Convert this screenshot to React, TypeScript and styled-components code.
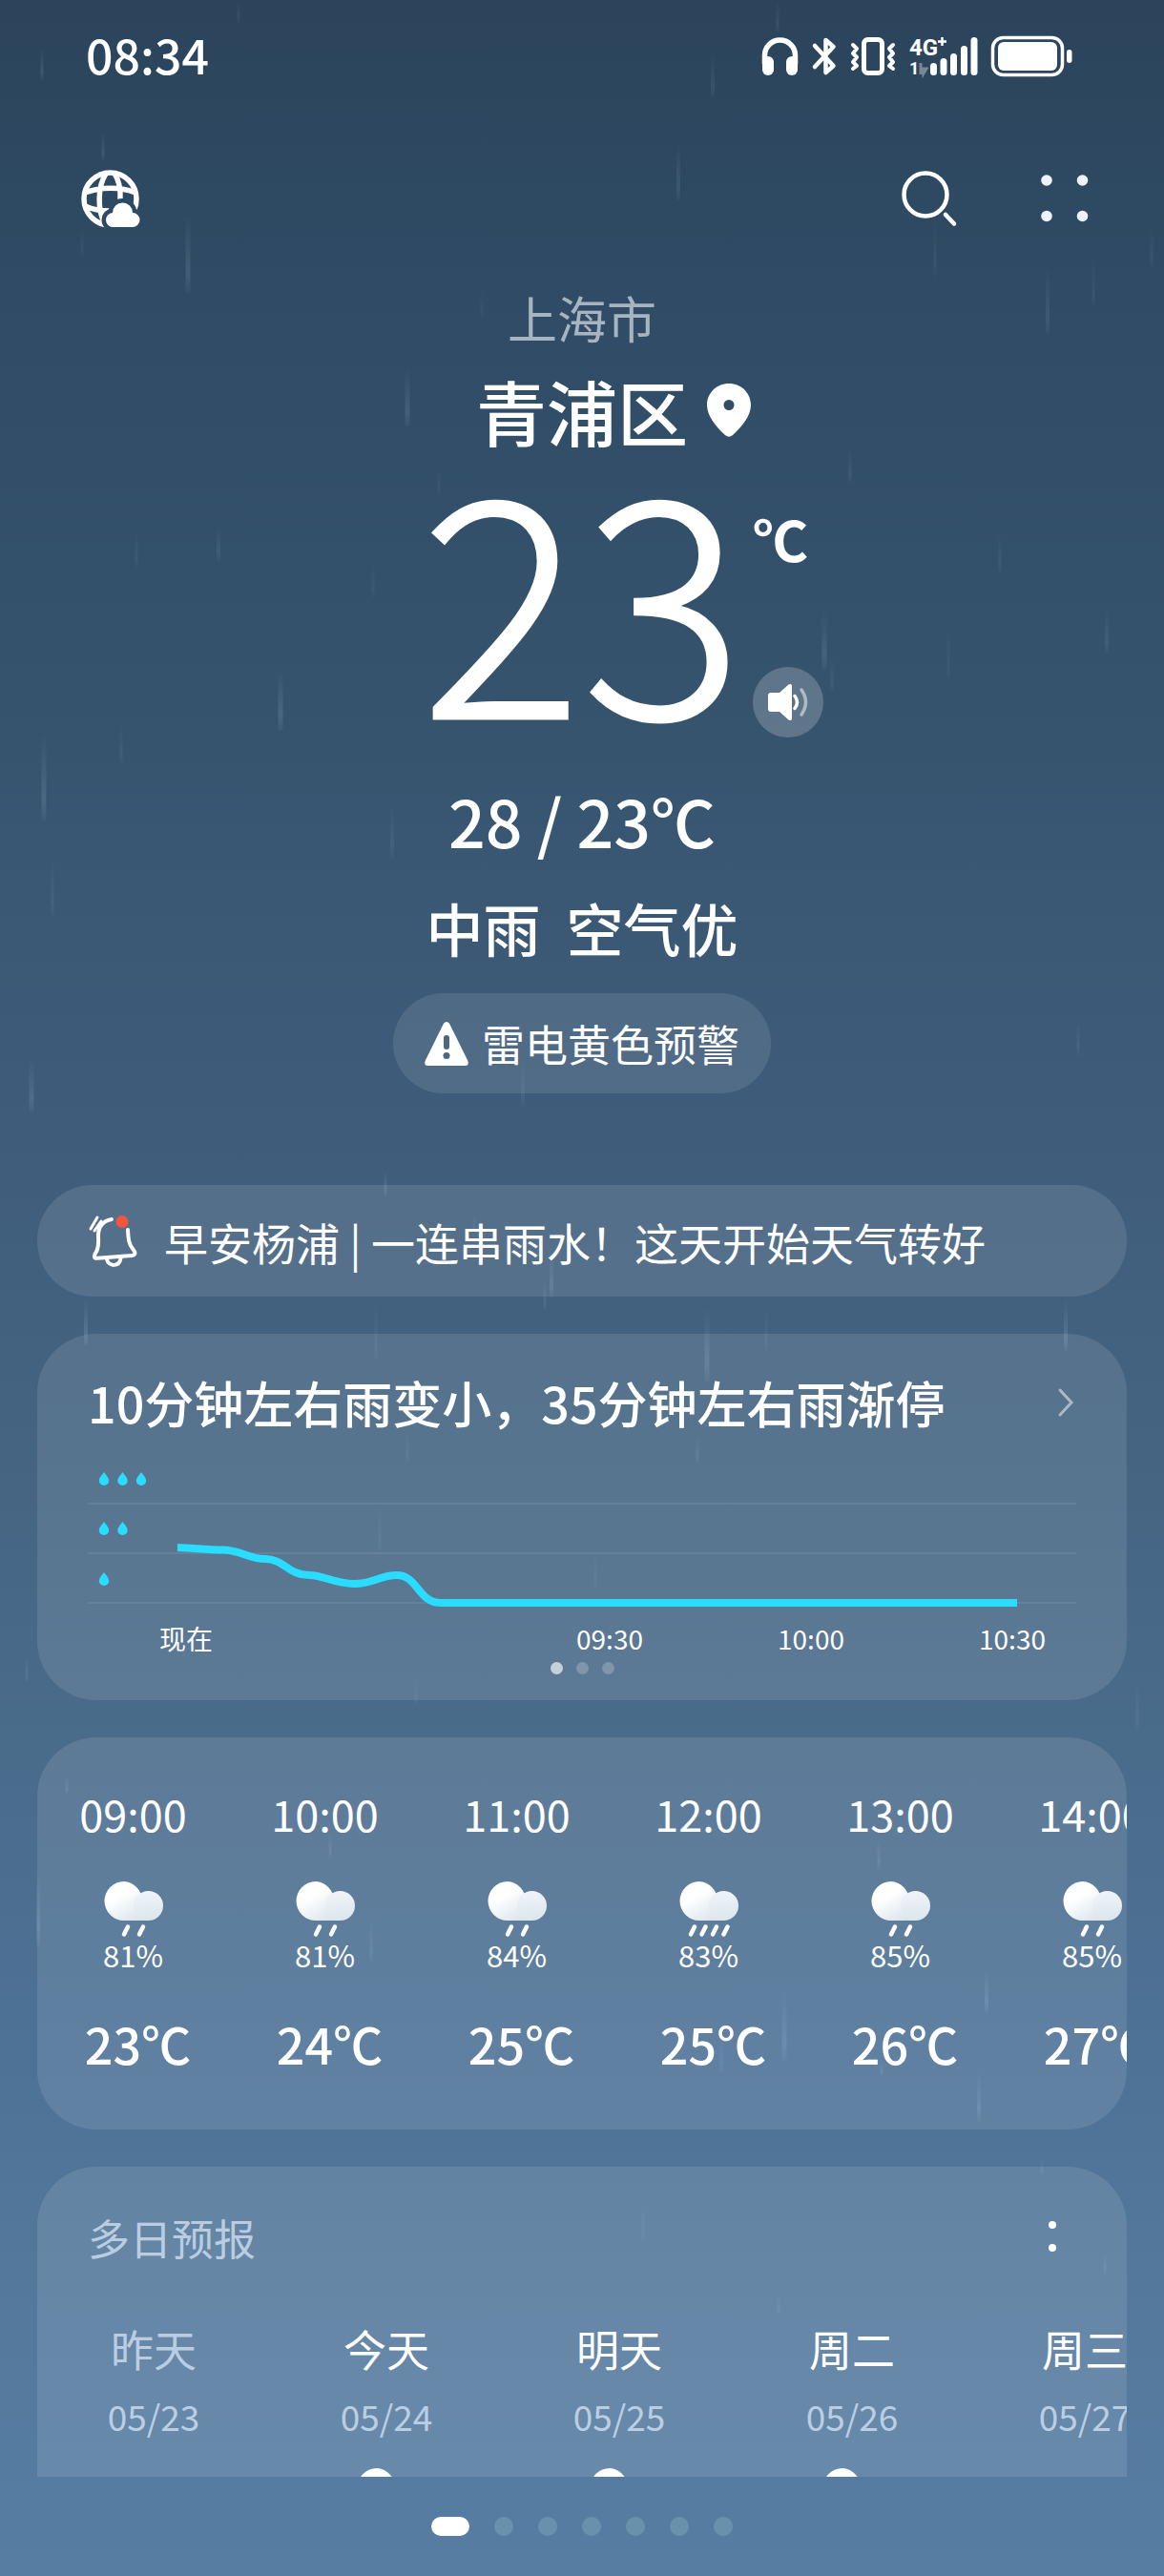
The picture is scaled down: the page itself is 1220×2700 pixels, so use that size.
import React, { useId } from "react";
import styled, { createGlobalStyle } from "styled-components";

const GlobalStyle = createGlobalStyle`
  * { box-sizing: border-box; }
  body {
    margin: 0;
    background: #2c455c;
    color: #fff;
    font-family: "Noto Sans CJK SC", "Noto Sans", sans-serif;
  }
  button { font: inherit; color: inherit; background: none; border: 0; padding: 0; cursor: pointer; }
  svg { display: block; flex: none; overflow: visible; }
  h1, h2, p { margin: 0; font-weight: inherit; }
`;

/* ---------- shell ---------- */

const Shell = styled.div`
  position: relative;
  display: flex;
  flex-direction: column;
  height: 100vh;
  overflow: hidden;
  background: linear-gradient(
    180deg,
    #2b445b 0%,
    #2f4b65 11%,
    #37546f 29%,
    #3f5d7b 44%,
    #456583 58%,
    #4a6c8b 68%,
    #4d7095 78%,
    #53789b 88%,
    #587da3 100%
  );
`;

const RainLayer = styled.svg`
  position: absolute;
  inset: 0;
  width: 100%;
  height: 100%;
  pointer-events: none;
`;

const StatusBar = styled.header`
  position: relative;
  display: flex;
  align-items: center;
  justify-content: space-between;
  height: 118px;
  padding: 0 96px 0 90px;
  flex: none;
`;

const Clock = styled.time`
  padding-bottom: 6px;
  font-size: 50px;
  line-height: 60px;
  font-weight: 500;
`;

const StatusIcons = styled.div`
  display: flex;
  align-items: center;
  gap: 14px;
`;

const Toolbar = styled.nav`
  position: relative;
  display: flex;
  align-items: center;
  height: 180px;
  padding: 0 79px 0 85px;
  gap: 89px;
  flex: none;
`;

const IconButton = styled.button<{ $first?: boolean }>`
  display: flex;
  margin-right: ${(p) => (p.$first ? "auto" : "0")};
`;

const Scroller = styled.main`
  position: relative;
  flex: 1;
  min-height: 0;
  overflow-y: auto;
  scrollbar-width: none;
`;

const PageDots = styled.footer`
  position: relative;
  display: flex;
  align-items: center;
  justify-content: center;
  gap: 26px;
  height: 104px;
  flex: none;
`;

const PageDot = styled.button<{ $active?: boolean }>`
  width: ${(p) => (p.$active ? 40 : 20)}px;
  height: 20px;
  border-radius: 10px;
  background: ${(p) => (p.$active ? "#fff" : "rgba(130, 170, 185, 0.45)")};
`;

/* ---------- hero ---------- */

const Hero = styled.section`
  display: flex;
  flex-direction: column;
  align-items: center;
`;

const City = styled.p`
  font-size: 52px;
  line-height: 70px;
  color: rgba(255, 255, 255, 0.58);
`;

const CenteredRow = styled.div`
  display: grid;
  grid-template-columns: 1fr auto 1fr;
  width: 100%;
`;

const DistrictRow = styled(CenteredRow)`
  align-items: center;
  column-gap: 20px;
  margin-top: 12px;
`;

const District = styled.h1`
  grid-column: 2;
  font-size: 74px;
  line-height: 100px;
  font-weight: 500;
`;

const TempRow = styled(CenteredRow)`
  column-gap: 10px;
  height: 293px;
`;

const BigTemp = styled.p`
  grid-column: 2;
  font-size: 316px;
  line-height: 270px;
  font-weight: 300;
  -webkit-text-stroke: 3px #fff;
`;

const TempSide = styled.div`
  display: flex;
  flex-direction: column;
  align-items: flex-start;
  justify-content: space-between;
  padding-top: 48px;
`;

const Unit = styled.span`
  font-size: 58px;
  line-height: 72px;
  font-weight: 700;
`;

const SpeakButton = styled.button`
  display: flex;
  align-items: center;
  justify-content: center;
  width: 74px;
  height: 74px;
  border-radius: 50%;
  background: rgba(255, 255, 255, 0.2);
`;

const Range = styled.p`
  margin-top: 45px;
  font-size: 68px;
  line-height: 84px;
  font-weight: 500;
`;

const Condition = styled.p`
  margin-top: 28px;
  font-size: 60px;
  line-height: 84px;
  font-weight: 500;
  white-space: pre;
`;

const Warning = styled.button`
  display: flex;
  align-items: center;
  gap: 14px;
  height: 105px;
  margin-top: 27px;
  padding: 0 33px;
  border-radius: 53px;
  background: rgba(255, 255, 255, 0.1);
  font-size: 45px;
  line-height: 60px;
`;

/* ---------- cards ---------- */

const Stack = styled.div`
  display: flex;
  flex-direction: column;
  gap: 39px;
  padding: 0 39px;
  margin-top: 96px;
`;

const Card = styled.section`
  overflow: hidden;
  border-radius: 62px;
  background: rgba(255, 255, 255, 0.105);
`;

const Notice = styled.button`
  display: flex;
  align-items: center;
  gap: 28px;
  height: 117px;
  padding: 0 55px;
  border-radius: 58px;
  background: rgba(255, 255, 255, 0.105);
  font-size: 46px;
  line-height: 60px;
  text-align: left;
`;

const RainCard = styled(Card)`
  padding: 36px 53px 27px;
`;

const RainHeader = styled.div`
  display: flex;
  align-items: center;
  justify-content: space-between;
  padding-right: 3px;
`;

const RainTitle = styled.h2`
  font-size: 52px;
  line-height: 72px;
  font-weight: 500;
`;

const Chart = styled.svg`
  width: 100%;
  height: auto;
  margin-top: 34px;
`;

const Ticks = styled.div`
  display: flex;
  gap: 77px;
  padding-left: 36px;
  margin-top: 7px;
  font-size: 28px;
  line-height: 40px;
`;

const Tick = styled.span<{ $push?: boolean }>`
  width: 134px;
  text-align: center;
  margin-left: ${(p) => (p.$push ? "auto" : "0")};
`;

const SlideDots = styled.div`
  display: flex;
  justify-content: center;
  gap: 14px;
  margin-top: 5px;
`;

const SlideDot = styled.i<{ $active?: boolean }>`
  width: 13px;
  height: 13px;
  border-radius: 50%;
  background: rgba(255, 255, 255, ${(p) => (p.$active ? 0.65 : 0.22)});
`;

const Strip = styled.ul`
  display: flex;
  margin: 0;
  padding: 0;
  list-style: none;
  overflow-x: auto;
  scrollbar-width: none;
`;

const HourCard = styled(Card)`
  padding: 47px 0 51px;
`;

const Hour = styled.li`
  display: flex;
  flex-direction: column;
  align-items: center;
  flex: 0 0 201px;
`;

const HourTime = styled.time`
  font-size: 45px;
  line-height: 66px;
  margin-bottom: 37px;
`;

const Chance = styled.span`
  font-size: 31px;
  line-height: 36px;
`;

const HourTemp = styled.span`
  margin-top: 36px;
  padding-left: 10px;
  font-size: 52px;
  line-height: 78px;
  font-weight: 500;
`;

const DailyCard = styled(Card)`
  padding: 44px 0 60px;
`;

const DailyHeader = styled.div`
  display: flex;
  align-items: center;
  justify-content: space-between;
  padding: 0 56px 0 53px;
  margin-bottom: 54px;
`;

const DailyTitle = styled.h2`
  font-size: 44px;
  line-height: 60px;
  color: rgba(225, 238, 255, 0.7);
`;

const Day = styled.li`
  display: flex;
  flex-direction: column;
  align-items: center;
  flex: 0 0 244px;
`;

const DayName = styled.span<{ $past?: boolean }>`
  font-size: 45px;
  line-height: 66px;
  color: ${(p) => (p.$past ? "rgba(225, 238, 255, 0.7)" : "#fff")};
`;

const DayDate = styled.time`
  margin: 13px 0 30px;
  font-size: 37px;
  line-height: 48px;
  color: rgba(225, 238, 255, 0.7);
`;

/* ---------- drawings ---------- */

const streaks: [number, number, number, number, number][] = [
  // x, top, length, width, strength
  [44, 50, 34, 3, 0.14], [108, 138, 30, 3, 0.13], [197, 225, 82, 5, 0.15], [86, 240, 28, 3, 0.07],
  [250, 0, 24, 3, 0.08], [747, 56, 46, 4, 0.1], [815, 0, 34, 3, 0.1], [980, 230, 60, 3, 0.08],
  [1207, 240, 40, 3, 0.09], [711, 150, 60, 4, 0.12], [427, 385, 62, 5, 0.15], [505, 304, 30, 3, 0.07],
  [460, 490, 30, 3, 0.06], [891, 470, 36, 3, 0.1], [391, 590, 36, 3, 0.07], [864, 640, 62, 5, 0.14],
  [872, 690, 34, 4, 0.07], [1098, 280, 70, 4, 0.12], [1146, 270, 50, 3, 0.08], [229, 550, 38, 4, 0.1],
  [143, 560, 34, 3, 0.08], [294, 700, 66, 5, 0.16], [46, 770, 90, 5, 0.16], [127, 760, 40, 3, 0.09],
  [411, 840, 60, 4, 0.09], [548, 1110, 50, 4, 0.08], [33, 1110, 56, 5, 0.15], [55, 900, 60, 3, 0.1],
  [1130, 1070, 36, 3, 0.09], [1048, 560, 40, 3, 0.08], [994, 660, 50, 3, 0.07], [1160, 640, 44, 4, 0.1],
  [404, 1226, 28, 3, 0.16], [578, 1312, 48, 4, 0.15], [571, 1345, 28, 3, 0.12], [90, 1360, 50, 4, 0.18],
  [394, 1365, 60, 3, 0.09], [497, 1270, 20, 3, 0.07], [741, 1370, 78, 5, 0.16], [803, 1372, 44, 3, 0.08],
  [1117, 1362, 54, 4, 0.18], [427, 1500, 32, 3, 0.08], [731, 1505, 28, 3, 0.1], [398, 1576, 50, 3, 0.08],
  [624, 1628, 38, 3, 0.07], [28, 1735, 28, 3, 0.12], [436, 1755, 34, 3, 0.07], [1192, 1760, 54, 3, 0.08],
  [70, 1862, 18, 3, 0.14], [346, 1920, 28, 3, 0.12], [389, 2010, 46, 3, 0.12], [40, 1960, 80, 4, 0.16],
  [921, 1926, 34, 3, 0.14], [1034, 2064, 46, 4, 0.16], [822, 2082, 78, 5, 0.14], [756, 2130, 42, 4, 0.08],
  [924, 2160, 16, 3, 0.12], [1026, 2170, 54, 4, 0.14], [674, 2312, 36, 3, 0.08], [816, 2408, 18, 3, 0.12],
  [1158, 2360, 24, 3, 0.12], [1092, 2262, 18, 3, 0.1],
];

const Rain = () => (
  <RainLayer viewBox="0 0 1220 2700" preserveAspectRatio="xMidYMin slice" aria-hidden="true">
    <defs>
      <linearGradient id="streak" x1="0" y1="0" x2="0" y2="1">
        <stop offset="0" stopColor="#cfe4f5" stopOpacity="0" />
        <stop offset="0.75" stopColor="#cfe4f5" stopOpacity="1" />
        <stop offset="1" stopColor="#cfe4f5" stopOpacity="0.3" />
      </linearGradient>
    </defs>
    {streaks.map(([x, y, h, w, o]) => (
      <rect key={`${x}-${y}`} x={x - w / 2} y={y} width={w} height={h} rx={w / 2} fill="url(#streak)" opacity={o * 0.8} />
    ))}
  </RainLayer>
);

const Headphones = () => (
  <svg width="39" height="40" viewBox="0 0 39 40" fill="none">
    <path d="M3.500 28V19a16 16 0 0 1 32 0v9" stroke="#fff" strokeWidth="5.500" />
    <rect x="1" y="20" width="12" height="20" rx="6" fill="#fff" />
    <rect x="26" y="20" width="12" height="20" rx="6" fill="#fff" />
  </svg>
);

const Bluetooth = () => (
  <svg width="26" height="40" viewBox="0 0 26 40" fill="none" stroke="#fff" strokeWidth="4.500" strokeLinecap="round" strokeLinejoin="round">
    <path d="M3 9l19.500 21-8 7V3l8 7L3 31" />
  </svg>
);

const Vibrate = () => (
  <svg width="48" height="40" viewBox="0 0 48 40" fill="none" stroke="#fff" strokeLinecap="round" strokeLinejoin="round">
    <rect x="14.500" y="2.500" width="19" height="35" rx="4" strokeWidth="5" />
    <path d="M3 8l4 4-4 5 4 4-4 5 4 4-4 3M45 8l-4 4 4 5-4 4 4 5-4 4 4 3" strokeWidth="4" />
  </svg>
);

const Signal = () => (
  <svg width="72" height="40" viewBox="0 0 72 40" fill="#fff">
    <text x="0" y="19" fontSize="24" fontWeight="700" fontFamily="Roboto, sans-serif">4G</text>
    <path d="M30 4.500h9M34.500 0v9" stroke="#fff" strokeWidth="2.500" />
    <text x="0" y="39" fontSize="18" fontWeight="700" fontFamily="Roboto, sans-serif">1</text>
    <path d="M12 27v12M15 33l3 0-3 5z" stroke="#fff" strokeWidth="3" opacity="0.35" />
    <rect x="22" y="27" width="7" height="13" rx="3.500" />
    <rect x="32.500" y="22" width="7" height="18" rx="3.500" />
    <rect x="43" y="17" width="7" height="23" rx="3.500" />
    <rect x="54" y="9" width="7" height="31" rx="3.500" />
    <rect x="64.500" y="0" width="7" height="40" rx="3.500" />
  </svg>
);

const Battery = () => (
  <svg width="85" height="42" viewBox="0 0 85 42" fill="none">
    <rect x="1.500" y="1.500" width="73" height="39" rx="11" stroke="#fff" strokeWidth="3.500" />
    <rect x="7" y="6" width="62" height="30" rx="6" fill="#fff" />
    <rect x="79" y="14" width="5.500" height="14" rx="2.750" fill="#fff" />
  </svg>
);

const cloudPath = "M34 60a7.500 7.500 0 0 1-1-15a10.500 10.500 0 0 1 21 0a7.500 7.500 0 0 1 0 15z";

const Globe = () => (
  <svg width="62" height="61" viewBox="0 0 62 61" fill="none">
    <mask id="globeCut">
      <rect width="62" height="61" fill="#fff" />
      <path d={cloudPath} fill="#000" stroke="#000" strokeWidth="9" />
    </mask>
    <g mask="url(#globeCut)" stroke="#fff" strokeWidth="5.500">
      <circle cx="30.500" cy="30.500" r="27.500" />
      <path d="M4 24C20 17.500 42 17.500 57 24M4 38C14 42.500 22 43 34 43M26 4C17 18 17 42 25 57M35 4c5 7 6.500 17 6 28" />
    </g>
    <path d={cloudPath} fill="#fff" />
  </svg>
);

const Search = () => (
  <svg width="57" height="58" viewBox="0 0 57 58" fill="none" stroke="#fff" strokeLinecap="round">
    <circle cx="25" cy="25" r="22.500" strokeWidth="4.500" />
    <path d="M46 46l9 9.500" strokeWidth="4.500" />
  </svg>
);

const FourDots = () => (
  <svg width="50" height="50" viewBox="0 0 50 50" fill="#eef2fa">
    <circle cx="6" cy="6" r="5.800" />
    <circle cx="43.500" cy="6" r="5.800" />
    <circle cx="6" cy="43.500" r="5.800" />
    <circle cx="43.500" cy="43.500" r="5.800" />
  </svg>
);

const Pin = () => (
  <svg width="46" height="56" viewBox="0 0 46 56">
    <path fill="#fff" fillRule="evenodd" d="M23 0C10 0 0 10 0 22.500C0 34 10 46 19 54q4 3.500 8 0C36 46 46 34 46 22.500C46 10 36 0 23 0zM23 17a5.500 5.500 0 1 1 0 11a5.500 5.500 0 0 1 0-11z" />
  </svg>
);

const Speaker = () => (
  <svg width="42" height="40" viewBox="0 0 42 40" fill="none" strokeLinecap="round">
    <path fill="#fff" d="M3 10h9L21.500 1.500Q25 0 25 3v34q0 3-3.500 1.500L12 30H3q-3 0-3-3V13q0-3 3-3z" />
    <path d="M28 13.500q5 6.500 0 13" stroke="#fff" strokeWidth="3.500" />
    <path d="M35 7q9 13 0 26" stroke="#fff" strokeWidth="3.500" opacity="0.5" />
  </svg>
);

const Triangle = () => (
  <svg width="46" height="46" viewBox="0 0 46 46">
    <path fill="#fff" d="M20 1.800q3-3.600 6 0L45.400 41q1.600 5-3 5H3.600q-4.600 0-3-5z" />
    <path stroke="#4c6780" strokeWidth="6" strokeLinecap="round" d="M23 17v9" />
    <circle cx="23" cy="35.500" r="3.500" fill="#4c6780" />
  </svg>
);

const Bell = () => (
  <svg width="50" height="56" viewBox="0 0 50 56" fill="none" stroke="#fff" strokeWidth="4" strokeLinecap="round">
    <path d="M23 5C13 7 9 13 9 22c.5 8 .5 12-2 17c-3 4-3 7 1 6.800L44 43c4-.5 4.500-3 1.500-6.500C41 31 40.500 26 40 16" />
    <path d="M1 15L8 3M5 17L12 7" strokeWidth="3" />
    <path d="M18 47c2 8 13 8 14.500-1" />
    <circle cx="34" cy="7.500" r="6.500" fill="#f4553c" stroke="none" />
  </svg>
);

const Chevron = () => (
  <svg width="16" height="30" viewBox="0 0 16 30" fill="none" stroke="#fff" strokeWidth="3" strokeLinecap="round" opacity="0.5">
    <path d="M2 2l12 13L2 28" />
  </svg>
);

const TwoDots = () => (
  <svg width="44" height="34" viewBox="0 0 44 34" fill="#fff">
    <circle cx="22" cy="4" r="4" />
    <circle cx="22" cy="28" r="4" />
  </svg>
);

const RainCloud = ({ heavy }: { heavy?: boolean }) => {
  const id = useId();
  const drops = heavy ? [11, 22.5, 34, 45.5] : [20, 36];
  return (
    <svg width="62" height="60" viewBox="0 0 62 60" aria-hidden="true">
      <defs>
        <linearGradient id={`${id}a`} x1="0.2" y1="0.1" x2="0.8" y2="1">
          <stop offset="0.3" stopColor="#fff" />
          <stop offset="1" stopColor="#d8e4ec" />
        </linearGradient>
        <linearGradient id={`${id}b`} x1="0.4" y1="0" x2="0.5" y2="1">
          <stop offset="0" stopColor="#f1f4f7" />
          <stop offset="1" stopColor="#dbe6ed" />
        </linearGradient>
      </defs>
      <path fill={`url(#${id}a)`} d="M21 1a20.500 20.500 0 0 0 0 41H46V20H40A20.500 20.500 0 0 0 21 1z" />
      <circle cx="46.500" cy="26.500" r="15.500" fill={`url(#${id}b)`} />
      {drops.map((x) => (
        <path key={x} d={`M${x + 5} 48.500l-4 8`} stroke="#fff" strokeWidth="4.500" strokeLinecap="round" />
      ))}
    </svg>
  );
};

const Sun = () => (
  <svg width="62" height="60" viewBox="0 0 62 60" aria-hidden="true">
    <circle cx="31" cy="34" r="18" fill="#fbc94a" />
  </svg>
);

/* ---------- data ---------- */

const hours = [
  { time: "09:00", chance: "81%", temp: "23℃" },
  { time: "10:00", chance: "81%", temp: "24℃" },
  { time: "11:00", chance: "84%", temp: "25℃" },
  { time: "12:00", chance: "83%", temp: "25℃", heavy: true },
  { time: "13:00", chance: "85%", temp: "26℃" },
  { time: "14:00", chance: "85%", temp: "27℃" },
];

const days = [
  { name: "昨天", date: "05/23", past: true },
  { name: "今天", date: "05/24", rain: true },
  { name: "明天", date: "05/25", rain: true },
  { name: "周二", date: "05/26", rain: true },
  { name: "周三", date: "05/27" },
];

const dropRows = [
  { y: 10, n: 3 },
  { y: 62, n: 2 },
  { y: 115, n: 1 },
];

const RainChart = () => (
  <Chart viewBox="0 0 1036 150" role="img" aria-label="降雨强度">
    {[36, 88, 140].map((y) => (
      <path key={y} d={`M0 ${y}H1036`} stroke="#fff" strokeOpacity="0.08" strokeWidth="2" />
    ))}
    {dropRows.map(({ y, n }) =>
      Array.from({ length: n }, (_, i) => (
        <path
          key={`${y}-${i}`}
          transform={`translate(${17 + i * 19.5} ${y})`}
          d="M0-7C3-3 5.200-1 5.200 2a5.200 5 0 0 1-10.400 0C-5.200-1-3-3 0-7z"
          fill="#2adcff"
        />
      ))
    )}
    <path
      d="M94 82C110 82.500 126 84.500 142 84.500C160 84.500 168 94 186 94C206 94 210 111 232 111C248 111 258 120 279 120C300 120 306 111 324 111C346 111 346 140 370 140H974"
      fill="none"
      stroke="#2adcff"
      strokeWidth="8"
    />
  </Chart>
);

export default function App() {
  return (
    <>
      <GlobalStyle />
      <Shell>
        <Rain />
        <StatusBar>
          <Clock>08:34</Clock>
          <StatusIcons>
            <Headphones />
            <Bluetooth />
            <Vibrate />
            <Signal />
            <Battery />
          </StatusIcons>
        </StatusBar>
        <Toolbar>
          <IconButton $first aria-label="全球天气"><Globe /></IconButton>
          <IconButton aria-label="搜索"><Search /></IconButton>
          <IconButton aria-label="更多"><FourDots /></IconButton>
        </Toolbar>
        <Scroller>
          <Hero>
            <City>上海市</City>
            <DistrictRow>
              <District>青浦区</District>
              <Pin />
            </DistrictRow>
            <TempRow>
              <BigTemp>23</BigTemp>
              <TempSide>
                <Unit>℃</Unit>
                <SpeakButton aria-label="语音播报"><Speaker /></SpeakButton>
              </TempSide>
            </TempRow>
            <Range>28 / 23℃</Range>
            <Condition>中雨{"  "}空气优</Condition>
            <Warning>
              <Triangle />
              雷电黄色预警
            </Warning>
          </Hero>
          <Stack>
            <Notice>
              <Bell />
              早安杨浦 | 一连串雨水！这天开始天气转好
            </Notice>
            <RainCard>
              <RainHeader>
                <RainTitle>10分钟左右雨变小，35分钟左右雨渐停</RainTitle>
                <Chevron />
              </RainHeader>
              <RainChart />
              <Ticks>
                <Tick>现在</Tick>
                <Tick $push>09:30</Tick>
                <Tick>10:00</Tick>
                <Tick>10:30</Tick>
              </Ticks>
              <SlideDots>
                <SlideDot $active />
                <SlideDot />
                <SlideDot />
              </SlideDots>
            </RainCard>
            <HourCard>
              <Strip>
                {hours.map((h) => (
                  <Hour key={h.time}>
                    <HourTime>{h.time}</HourTime>
                    <RainCloud heavy={h.heavy} />
                    <Chance>{h.chance}</Chance>
                    <HourTemp>{h.temp}</HourTemp>
                  </Hour>
                ))}
              </Strip>
            </HourCard>
            <DailyCard>
              <DailyHeader>
                <DailyTitle>多日预报</DailyTitle>
                <IconButton aria-label="预报选项"><TwoDots /></IconButton>
              </DailyHeader>
              <Strip>
                {days.map((d) => (
                  <Day key={d.date}>
                    <DayName $past={d.past}>{d.name}</DayName>
                    <DayDate>{d.date}</DayDate>
                    {d.rain ? <RainCloud /> : <Sun />}
                  </Day>
                ))}
              </Strip>
            </DailyCard>
          </Stack>
        </Scroller>
        <PageDots>
          {[0, 1, 2, 3, 4, 5, 6].map((i) => (
            <PageDot key={i} $active={i === 0} aria-label={`城市 ${i + 1}`} />
          ))}
        </PageDots>
      </Shell>
    </>
  );
}
